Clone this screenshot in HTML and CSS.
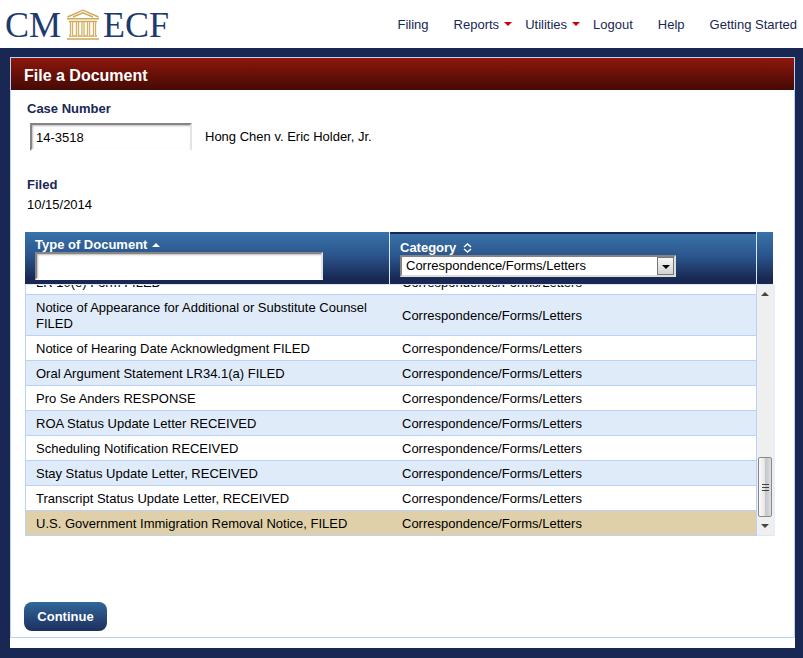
FILE: index.html
```
<!DOCTYPE html>
<html lang="en">
<head>
<meta charset="utf-8">
<meta name="viewport" content="width=device-width, initial-scale=1.0">
<title>CM/ECF - File a Document</title>
<link rel="stylesheet" href="styles.css">
</head>
<body>
<header class="top">
	<a class="logo" href="#" aria-label="CM/ECF home">
		<span>CM</span>
		<svg width="34" height="32" viewBox="0 0 34 32" fill="none" stroke="#cda95a">
			<path d="M1.500 8L17 1.200 32.500 8M1 9.800h32M7 8L17 3.800 27 8" stroke-width="1.400"/>
			<path d="M3 12.500h28M3 27h28M1 30h32" stroke-width="1.600"/>
			<path d="M5.500 13v14M11.500 13v14M17 13v14M22.500 13v14M28.500 13v14" stroke="#d3b36a" stroke-width="3.400"/>
			<path d="M5.500 13v14M11.500 13v14M17 13v14M22.500 13v14M28.500 13v14" stroke="#f5ebd2" stroke-width="1"/>
		</svg>
		<span>ECF</span>
	</a>
	<nav class="menu">
		<a href="#">Filing</a>
		<a class="drop" href="#">Reports</a>
		<a class="drop" href="#">Utilities</a>
		<a href="#">Logout</a>
		<a href="#">Help</a>
		<a href="#">Getting Started</a>
	</nav>
</header>

<main class="page">
<form class="panel">
	<h1>File a Document</h1>
	<div class="content">
		<label class="title" for="caseNumber">Case Number</label>
		<div class="case">
			<input class="inset" id="caseNumber" type="text" value="14-3518">
			<span>Hong Chen v. Eric Holder, Jr.</span>
		</div>
		<div class="title">Filed</div>
		<div>10/15/2014</div>

		<div class="grid">
			<div class="head">
				<div class="hcell">
					<label for="docType">Type of Document
						<svg class="sort" width="8" height="6" viewBox="0 0 8 6"><path d="M4 0l4 4H0z" fill="#fff"/></svg>
					</label>
					<input class="inset" id="docType" type="text">
				</div>
				<div class="hcell category">
					<label for="category">Category
						<svg class="sort" width="9" height="10" viewBox="0 0 9 10" fill="none" stroke="#fff" stroke-width="1.500"><path d="M1 4l3.500-3L8 4M1 6l3.500 3L8 6"/></svg>
					</label>
					<div class="pick">
						<select id="category">
							<option>Correspondence/Forms/Letters</option>
						</select>
						<span class="arrow"></span>
					</div>
				</div>
				<div class="hcell corner"></div>
			</div>
			<div class="body">
				<div class="rows">
					<table>
						<tr><td>LR 10(e) Form FILED</td><td>Correspondence/Forms/Letters</td></tr>
						<tr><td>Notice of Appearance for Additional or Substitute Counsel FILED</td><td>Correspondence/Forms/Letters</td></tr>
						<tr><td>Notice of Hearing Date Acknowledgment FILED</td><td>Correspondence/Forms/Letters</td></tr>
						<tr><td>Oral Argument Statement LR34.1(a) FILED</td><td>Correspondence/Forms/Letters</td></tr>
						<tr><td>Pro Se Anders RESPONSE</td><td>Correspondence/Forms/Letters</td></tr>
						<tr><td>ROA Status Update Letter RECEIVED</td><td>Correspondence/Forms/Letters</td></tr>
						<tr><td>Scheduling Notification RECEIVED</td><td>Correspondence/Forms/Letters</td></tr>
						<tr><td>Stay Status Update Letter, RECEIVED</td><td>Correspondence/Forms/Letters</td></tr>
						<tr><td>Transcript Status Update Letter, RECEIVED</td><td>Correspondence/Forms/Letters</td></tr>
						<tr class="selected"><td>U.S. Government Immigration Removal Notice, FILED</td><td>Correspondence/Forms/Letters</td></tr>
					</table>
				</div>
				<div class="bar">
					<span class="up"></span>
					<span class="thumb"><i></i><i></i><i></i></span>
					<span class="down"></span>
				</div>
			</div>
		</div>

		<button class="continue" type="button">Continue</button>
	</div>
</form>
</main>
</body>
</html>
```
FILE: styles.css
```
* {box-sizing: border-box;}
body {
	margin: 0;
	background: #182853;
	font-family: "Liberation Sans", Arial, sans-serif;
	font-size: 13px;
	line-height: 16px;
	color: #000;
}
input, select, button {
	font: inherit;
	color: inherit;
}

/* top bar */
.top {
	display: flex;
	justify-content: space-between;
	height: 48px;
	padding: 0 6px 0 5px;
	background: #fff;
}
.logo {
	display: flex;
	align-items: center;
	gap: 3px;
	height: 50px;
	font-family: "Liberation Serif", serif;
	font-size: 36px;
	line-height: 48px;
	color: #1d3a6e;
	text-decoration: none;
}
.logo svg {margin-left: 2px;}
.menu {
	display: flex;
	align-items: center;
	gap: 25px;
	padding-top: 2px;
}
.menu a {
	color: #182853;
	text-decoration: none;
}
.menu .drop {margin-right: -12px;}
.menu .drop::after {
	content: "";
	display: inline-block;
	margin-left: 5px;
	vertical-align: 3px;
	border: 4px solid transparent;
	border-top-color: #c00;
	border-bottom: 0;
}

/* panel */
.page {
	margin: 9px 8px 10px 10px;
	padding-bottom: 10px;
	background: #fff;
}
.panel {border: 1px solid #b9d3f8;}
h1 {
	margin: 0;
	padding: 8px 13px 4px;
	font-size: 16px;
	line-height: 20px;
	color: #fff;
	background: linear-gradient(#8d170c, #440a04);
}
.content {padding: 11px 19px 6px 16px;}
.title {
	display: block;
	font-weight: bold;
	color: #182853;
	margin-bottom: 4px;
}
.inset {
	border: 2px solid #858585;
	border-right-color: #e4e4e4;
	border-bottom-color: #fff;
	background: #fff;
	box-shadow: inset 1px 1px 2px #bbb;
}
.case {
	display: flex;
	align-items: center;
	gap: 13px;
	margin: 6px 0 26px 3px;
}
.case .inset {
	width: 162px;
	height: 28px;
	padding: 0 4px;
}

/* document list */
.grid {
	margin: 19px 0 0 -2px;
}
.body {
	display: grid;
	grid-template-columns: 1fr 18px;
}
.head {
	display: grid;
	grid-template-columns: 364fr 366fr 16px;
	gap: 1px;
	margin-right: 2px;
	border-bottom: 1px solid #dce8f8;
	background: #dce8f8;
}
.hcell {
	height: 52px;
	padding: 5px 10px 0;
	background: linear-gradient(#3872a8, #2b558c 45%, #182853 90%);
}
.corner {padding: 0;}
.hcell label {
	display: block;
	font-weight: bold;
	line-height: 15px;
	color: #fff;
}
.sort {margin-left: 1px;}
.hcell .inset {
	display: block;
	width: 288px;
	height: 28px;
}
.category {
	padding-top: 6px;
	border-top: 2px solid #182853;
}
.category .sort {
	margin-left: 3px;
	vertical-align: -1px;
}
.pick {
	position: relative;
	width: 276px;
}
.pick select {
	display: block;
	width: 100%;
	height: 22px;
	padding: 0 4px;
	border: 2px solid #858585;
	border-right-color: #ddd;
	border-bottom-color: #ddd;
	border-radius: 0;
	background: #fff;
	appearance: none;
}
.arrow {
	position: absolute;
	top: 2px;
	right: 2px;
	width: 17px;
	height: 18px;
	border: 1px solid #777;
	background: linear-gradient(#f6f6f6, #d2d2d2);
	pointer-events: none;
}
.arrow::after, .up::after, .down::after {
	content: "";
	display: block;
	margin: 7px auto;
	width: 0;
	border: 4px solid transparent;
	border-top-color: #000;
	border-bottom: 0;
}
/* column-reverse keeps the list scrolled to its end */
.rows {
	display: flex;
	flex-direction: column-reverse;
	height: 251px;
	overflow-y: auto;
	scrollbar-width: none;
}
table {
	width: 100%;
	flex-shrink: 0;
	table-layout: fixed;
	border-spacing: 0;
	border-left: 1px solid #b9d3f8;
	border-right: 1px solid #b9d3f8;
}
td {
	padding: 5px 10px 3px;
	border-bottom: 1px solid #b9d3f8;
}
td + td {padding-left: 11px;}
tr:nth-child(even) {background: #dfebf9;}
tr.selected {background: #dfd0a9;}

.bar {
	display: flex;
	flex-direction: column;
	padding: 0 1px;
	border-right: 2px solid #e6eefa;
	border-bottom: 1px solid #dce8f8;
	background: #efefef;
}
.up, .down {height: 18px;}
.up::after {transform: rotate(180deg);}
.up::after, .down::after {border-top-color: #444;}
.thumb {
	display: flex;
	flex-direction: column;
	align-items: center;
	justify-content: center;
	gap: 2px;
	height: 60px;
	margin-top: auto;
	border: 1px solid #888;
	border-radius: 2px;
	background: linear-gradient(to right, #fafafa, #e8e8e8 45%, #c3c5cb 55%, #dedede);
}
.thumb i {
	width: 7px;
	height: 1px;
	background: #444;
}

.continue {
	display: block;
	margin: 66px 0 0 -3px;
	width: 83px;
	height: 29px;
	border: 0;
	border-radius: 8px;
	font-weight: bold;
	color: #fff;
	background: linear-gradient(#316799, #1d2f5f);
}
```
